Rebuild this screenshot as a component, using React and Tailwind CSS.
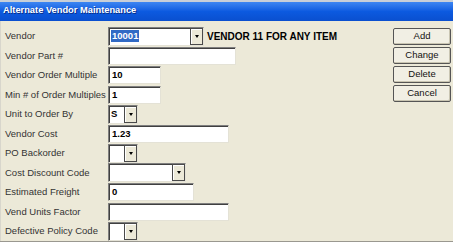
import React from 'react';

const sunken = 'border border-t-[#7f7f7f] border-l-[#7f7f7f] border-r-[#e4e2d6] border-b-[#e4e2d6] shadow-[inset_1px_1px_0_#404040] bg-white';

const Field = ({ w, value }) => (
  <div className={`${sunken} ${w} h-[18px] flex items-center pl-[3px] text-[9.5px] font-bold text-black`}>
    {value}
  </div>
);

const Combo = ({ w, value, selected }) => (
  <div className={`${sunken} ${w} h-[19px] flex items-center`}>
    <div className="flex-1 flex items-center pl-[2px] text-[9.5px] font-bold h-full">
      {value && (
        <span className={selected ? 'bg-[#316ac5] text-white px-[1px] leading-[12px]' : 'text-black'}>{value}</span>
      )}
    </div>
    <div className="w-[13px] h-[17px] bg-[#ece9d8] border border-[#4a4a4a] shadow-[inset_1px_1px_0_#fff] flex items-center justify-center">
      <div className="w-0 h-0 border-l-[2.5px] border-r-[2.5px] border-t-[3px] border-l-transparent border-r-transparent border-t-black" />
    </div>
  </div>
);

const Btn = ({ children }) => (
  <button className="w-[58px] h-[17px] border border-[#555] rounded-[2px] bg-[#f1efe4] shadow-[inset_-1px_-1px_0_#c9c5b2] text-[9.5px] text-[#111] leading-none">
    {children}
  </button>
);

const rows = [
  { label: 'Vendor', el: (
    <div className="flex items-center">
      <Combo w="w-[96px]" value="10001" selected />
      <span className="ml-[3px] text-[10px] font-bold text-black">VENDOR 11 FOR ANY ITEM</span>
    </div>
  ) },
  { label: 'Vendor Part #', el: <Field w="w-[128px]" /> },
  { label: 'Vendor Order Multiple', el: <Field w="w-[53px]" value="10" /> },
  { label: 'Min # of Order Multiples', el: <Field w="w-[53px]" value="1" /> },
  { label: 'Unit to Order By', el: <Combo w="w-[30px]" value="S" /> },
  { label: 'Vendor Cost', el: <Field w="w-[121px]" value="1.23" /> },
  { label: 'PO Backorder', el: <Combo w="w-[30px]" /> },
  { label: 'Cost Discount Code', el: <Combo w="w-[78px]" /> },
  { label: 'Estimated Freight', el: <Field w="w-[86px]" value="0" /> },
  { label: 'Vend Units Factor', el: <Field w="w-[121px]" /> },
  { label: 'Defective Policy Code', el: <Combo w="w-[30px]" /> },
];

export default function App() {
  return (
    <div className="w-[456px] h-[243px] bg-white overflow-hidden" style={{ fontFamily: '"Liberation Sans", Arial, sans-serif' }}>
      <div className="w-[453px] h-[242px] bg-[#ece9d8] border-b border-[#9a9890] flex flex-col">
        <div className="h-[2px] bg-[#c8cfd8]" />
        <div className="h-[19px] bg-gradient-to-b from-[#3d86f2] via-[#0c5ae0] to-[#0a4fcf] flex items-center pl-[3px]">
          <span className="text-white font-bold text-[9.3px] [text-shadow:1px_1px_0_#0a2f8a]">Alternate Vendor Maintenance</span>
        </div>
        <div className="flex-1 flex border-l border-[#d8d6cc]">
          <div className="pl-[4px] pt-[6px] flex flex-col">
            {rows.map((r) => (
              <div key={r.label} className="h-[19.5px] flex items-center">
                <div className="w-[103px] text-[9.5px] text-[#333]">{r.label}</div>
                {r.el}
              </div>
            ))}
          </div>
          <div className="ml-auto mr-[2px] pt-[7px] flex flex-col gap-[2px]">
            <Btn>Add</Btn>
            <Btn>Change</Btn>
            <Btn>Delete</Btn>
            <Btn>Cancel</Btn>
          </div>
        </div>
      </div>
    </div>
  );
}
